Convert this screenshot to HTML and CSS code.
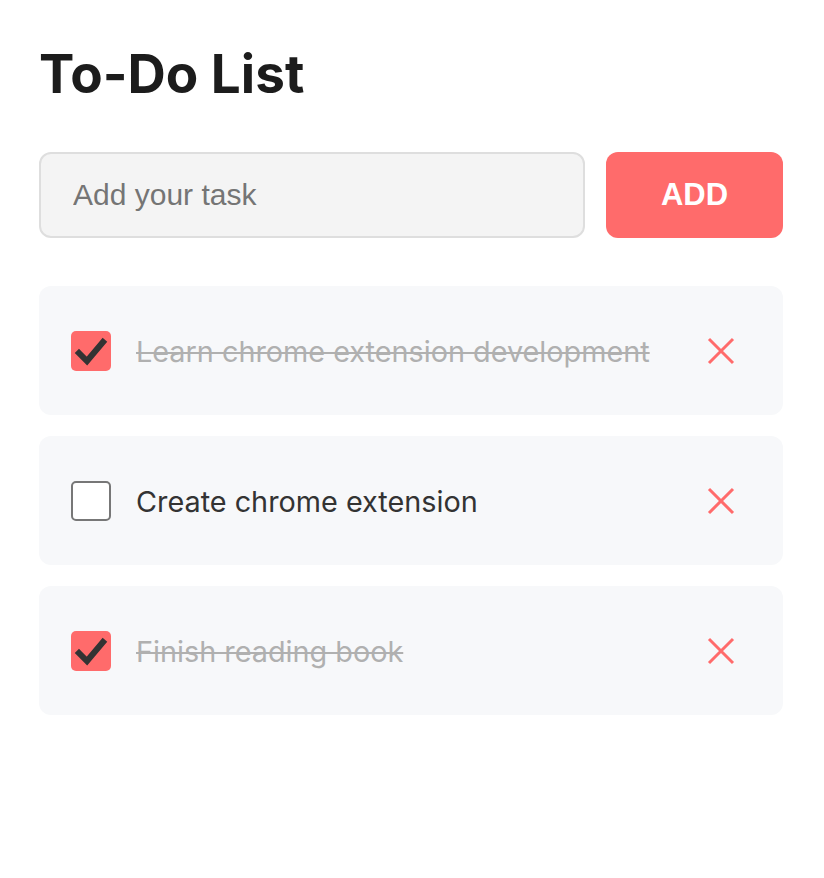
FILE: index.html
```html
<!DOCTYPE html>
<html lang="en">
<head>
<meta charset="utf-8">
<title>To-Do List</title>
<link rel="stylesheet" href="styles.css">
</head>
<body>
<main class="app">
  <h1 class="title">To-Do List</h1>
  <form class="add-row">
    <input class="task-input" type="text" placeholder="Add your task">
    <button class="add-btn" type="button">ADD</button>
  </form>
  <ul class="list">
    <li class="item done">
      <span class="check checked"><svg viewBox="0 0 40 40" width="40" height="40"><path d="M8 22 L16 30 L32 11" fill="none" stroke="#333" stroke-width="6" stroke-linecap="square" stroke-linejoin="miter"/></svg></span>
      <span class="label">Learn chrome extension development</span>
      <span class="remove"><svg viewBox="0 0 28 28" width="28" height="28"><path d="M2 2 L26 26 M26 2 L2 26" stroke="#ff6b6b" stroke-width="3"/></svg></span>
    </li>
    <li class="item">
      <span class="check"></span>
      <span class="label">Create chrome extension</span>
      <span class="remove"><svg viewBox="0 0 28 28" width="28" height="28"><path d="M2 2 L26 26 M26 2 L2 26" stroke="#ff6b6b" stroke-width="3"/></svg></span>
    </li>
    <li class="item done">
      <span class="check checked"><svg viewBox="0 0 40 40" width="40" height="40"><path d="M8 22 L16 30 L32 11" fill="none" stroke="#333" stroke-width="6" stroke-linecap="square" stroke-linejoin="miter"/></svg></span>
      <span class="label">Finish reading book</span>
      <span class="remove"><svg viewBox="0 0 28 28" width="28" height="28"><path d="M2 2 L26 26 M26 2 L2 26" stroke="#ff6b6b" stroke-width="3"/></svg></span>
    </li>
  </ul>
</main>
</body>
</html>
```
FILE: styles.css
```css
* { box-sizing: border-box; }
html, body { margin: 0; background: #fff; }
body { font-family: Inter, "Noto Sans", sans-serif; color: #1c1c1c; }
.app { width: 744px; margin: 0 0 0 39px; padding-top: 40px; }
.title { margin: 0; font-size: 53px; font-weight: 700; line-height: 68px; color: #1c1c1c; }
.add-row { display: flex; gap: 21px; margin-top: 44px; }
.task-input { flex: 1; height: 86px; border: 2px solid #dedede; border-radius: 12px; background: #f4f4f4; padding: 0 32px; font-family: "Liberation Sans", Arial, sans-serif; font-size: 30px; color: #333; outline: none; }
.task-input::placeholder { color: #757575; }
.add-btn { width: 177px; height: 86px; border: 0; border-radius: 12px; background: #ff6b6b; color: #fff; font-family: "Liberation Sans", Arial, sans-serif; font-weight: 700; font-size: 31px; }
.list { list-style: none; margin: 48px 0 0; padding: 0; display: flex; flex-direction: column; gap: 21px; }
.item { display: flex; align-items: center; height: 129px; padding: 1px 48px 0 32px; background: #f7f8fa; border-radius: 12px; }
.check { width: 40px; height: 40px; flex: none; border: 2px solid #777; border-radius: 5px; background: #fff; display: flex; }
.check.checked { border: 0; background: #ff6b6b; }
.label { flex: 1; margin-left: 25px; font-size: 28.8px; color: #333; }
.done .label { color: #b0b0b0; text-decoration: line-through; text-decoration-thickness: 2px; }
.remove { width: 28px; height: 28px; display: flex; }
```
